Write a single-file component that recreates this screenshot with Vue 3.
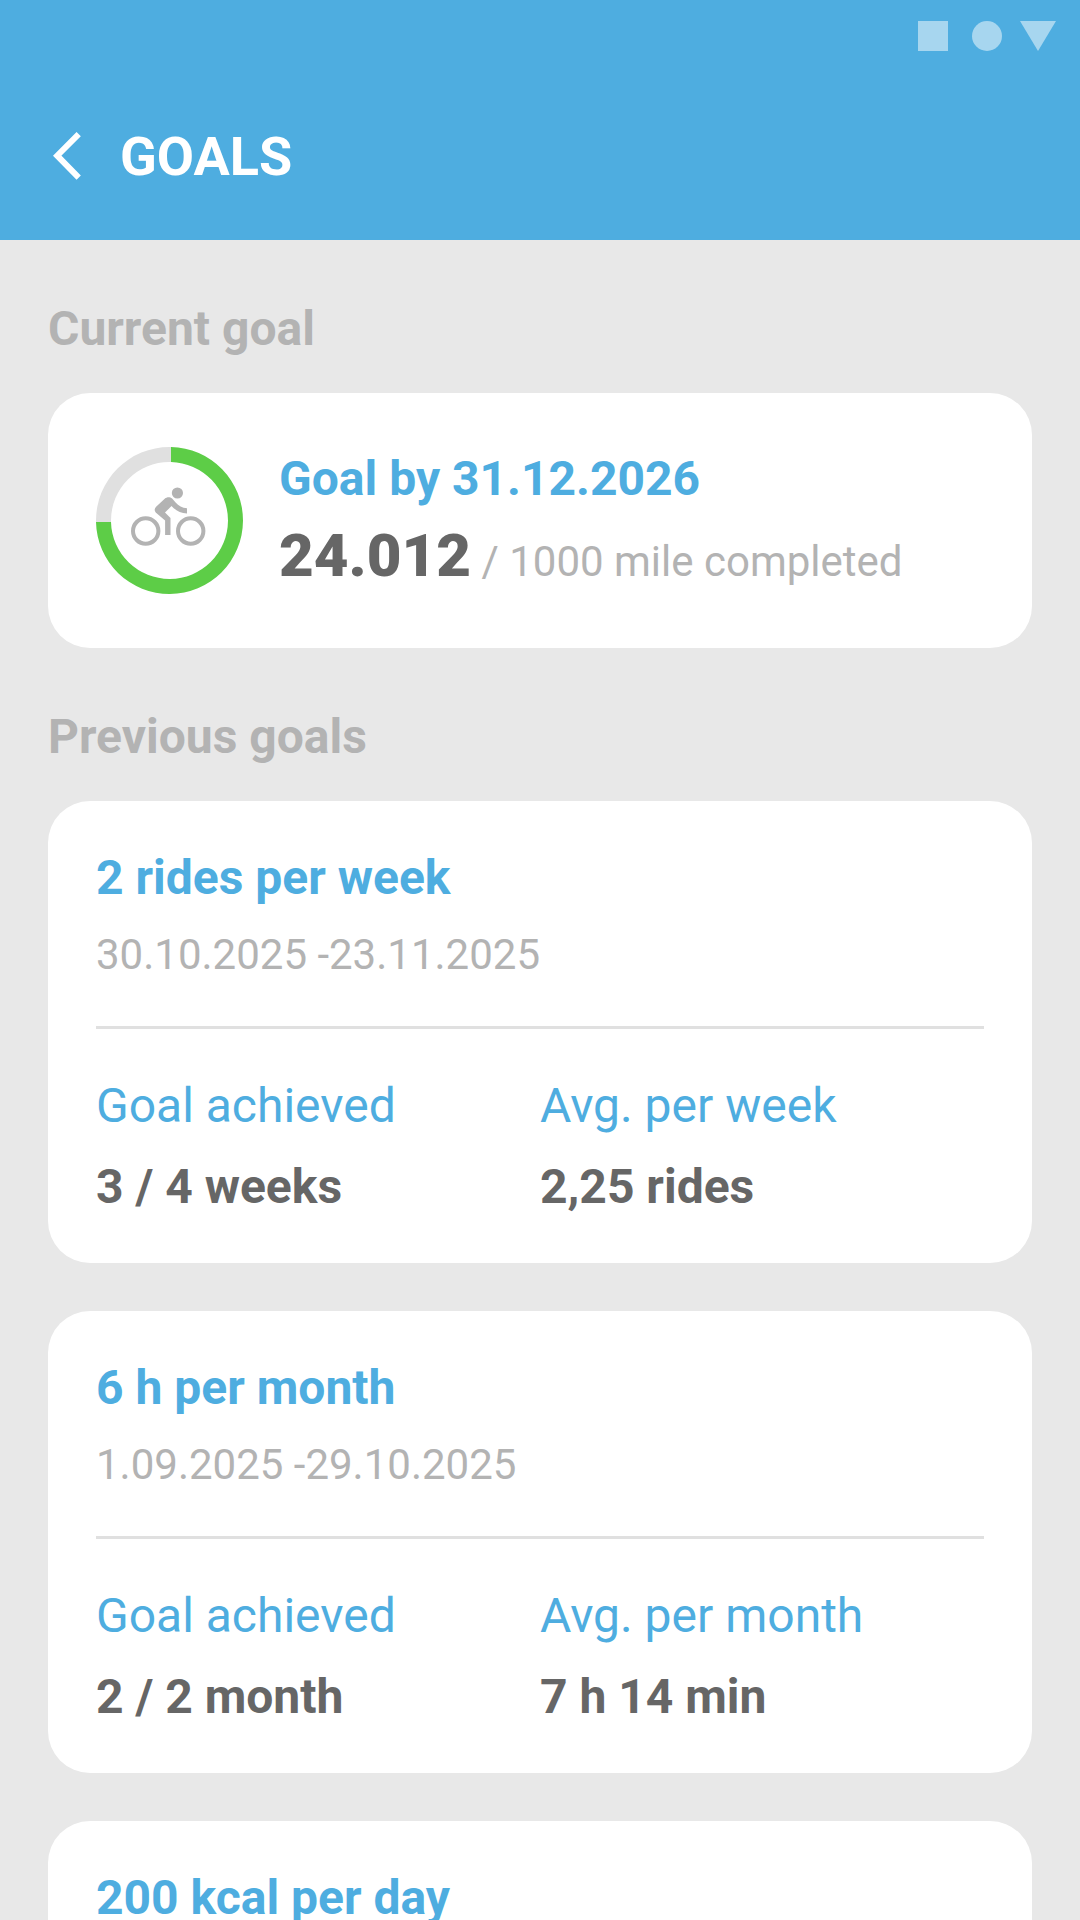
<template>
  <div class="screen">
    <header class="app-bar">
      <div class="status-bar">
        <svg width="138" height="30" viewBox="0 0 138 30" fill="#a7d6ef">
          <rect width="30" height="30" />
          <circle cx="69" cy="15" r="15" />
          <path d="M102 0h36l-18 30z" />
        </svg>
      </div>
      <div class="toolbar">
        <svg class="back" width="28" height="48" viewBox="0 0 28 48" fill="none" stroke="#fff" stroke-width="6">
          <path d="M25.7 2.1 4.2 23.7 25.7 45.6" />
        </svg>
        <h1>GOALS</h1>
      </div>
    </header>

    <main class="content">
      <h2>Current goal</h2>
      <section class="card current">
        <svg class="ring" width="147" height="147" viewBox="0 0 147 147">
          <path d="M75 0A73.5 73.5 0 1 1 0 75H15A58.5 58.5 0 1 0 75 15z" fill="#5dcd47" />
          <!-- remaining part of the progress -->
          <path d="M75 0H73.5A73.5 73.5 0 0 0 0 73.5V75H15V73.5A58.5 58.5 0 0 1 73.5 15H75z" fill="#e0e0e0" />
          <g fill="none" stroke="#b3b3b3" stroke-width="4">
            <circle cx="49.7" cy="84" r="12.7" />
            <circle cx="94.7" cy="84" r="12.7" />
          </g>
          <g fill="#b3b3b3">
            <circle cx="81.4" cy="46" r="5.6" />
            <path d="M74.5 88h-5.4V73.5l-8.5-7.2c-2.5-2.1-2.4-4.6-.5-6.5l8.6-8.1c2.2-2 5.4-2 7.4-.1l3.5 3.9c3 3.4 6.5 5.6 11.4 5.7v5.4c-6.3-.2-11.5-3.4-15.5-7.6l-6.5 6.6 5.5 5.5z" />
          </g>
        </svg>
        <div class="current-info">
          <h3>Goal by 31.12.2026</h3>
          <p class="progress"><strong>24.012</strong> <span>/ 1000 mile completed</span></p>
        </div>
      </section>

      <h2>Previous goals</h2>
      <section v-for="goal in previousGoals" :key="goal.title" class="card">
        <h3>{{ goal.title }}</h3>
        <p class="dates">{{ goal.dates }}</p>
        <div class="stats">
          <div v-for="stat in goal.stats" :key="stat.label" class="stat">
            <p class="label">{{ stat.label }}</p>
            <p class="value">{{ stat.value }}</p>
          </div>
        </div>
      </section>
    </main>
  </div>
</template>

<script setup>
const previousGoals = [
  {
    title: '2 rides per week',
    dates: '30.10.2025 -23.11.2025',
    stats: [
      { label: 'Goal achieved', value: '3 / 4 weeks' },
      { label: 'Avg. per week', value: '2,25 rides' }
    ]
  },
  {
    title: '6 h per month',
    dates: '1.09.2025 -29.10.2025',
    stats: [
      { label: 'Goal achieved', value: '2 / 2 month' },
      { label: 'Avg. per month', value: '7 h 14 min' }
    ]
  },
  {
    title: '200 kcal per day',
    dates: '',
    stats: []
  }
]
</script>

<style>
body {
  margin: 0;
}
</style>

<style scoped>
.screen {
  height: 1920px;
  overflow: hidden;
  background: #e8e8e8;
  color: #666;
  font-family: Roboto, sans-serif;
  font-size: 48px;
  line-height: 57px;
}

h1, h2, h3, p {
  margin: 0;
  font-size: inherit;
}

.app-bar {
  height: 240px;
  background: #4eade0;
}

.status-bar {
  display: flex;
  justify-content: flex-end;
  height: 51px;
  padding: 21px 24px 0 0;
}

.toolbar {
  display: flex;
  align-items: center;
  height: 168px;
  padding-left: 53px;
}

.back {
  margin-right: 39px;
}

h1 {
  color: #fff;
  font-size: 54px;
  line-height: 63px;
}

.content {
  padding: 60px 48px 0;
}

h2 {
  margin-bottom: 36px;
  color: #b3b3b3;
}

.card {
  box-sizing: border-box;
  height: 462px;
  margin-bottom: 48px;
  padding: 48px;
  border-radius: 42px;
  background: #fff;
}

h3 {
  color: #4eade0;
}

.current {
  display: flex;
  align-items: center;
  height: 255px;
  margin-bottom: 60px;
}

.ring {
  flex: none;
  margin-right: 36px;
}

.progress {
  display: flex;
  align-items: baseline;
  gap: 10.4px;
  margin-top: 13px;
  color: #b3b3b3;
  font-size: 42px;
  line-height: 49px;
}

.progress strong {
  color: #666;
  font-size: 60px;
  font-weight: 900;
  line-height: 71px;
}

.dates {
  margin-top: 24px;
  color: #b3b3b3;
  font-size: 42px;
  line-height: 49px;
}

.stats {
  display: flex;
  margin-top: 47px;
  padding-top: 48px;
  border-top: 3px solid #e0e0e0;
}

.stat {
  flex: 1;
}

.label {
  color: #4eade0;
}

.value {
  margin-top: 24px;
  font-weight: 700;
}
</style>
